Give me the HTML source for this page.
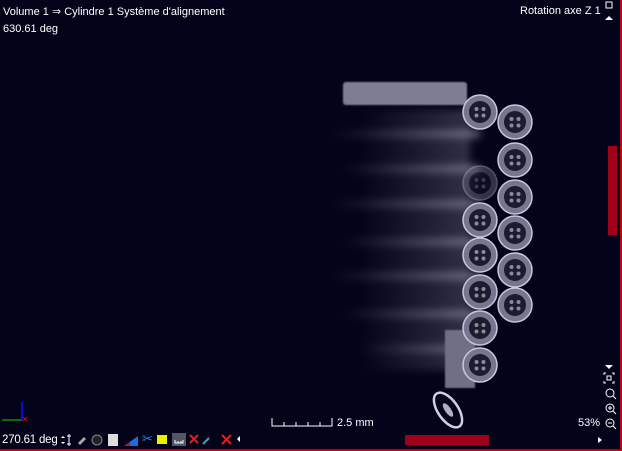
<!DOCTYPE html>
<html><head><meta charset="utf-8"><style>
html,body{margin:0;padding:0;background:#03031a;width:622px;height:451px;overflow:hidden;font-family:"Liberation Sans",sans-serif;color:#fff}
.t{position:absolute;font-size:11px;white-space:nowrap}
</style></head><body>
<div style="position:absolute;right:0;top:0;width:2px;height:451px;background:#c00010"></div>
<div style="position:absolute;left:0;bottom:0;width:622px;height:2px;background:#c00010"></div>
<svg width="622" height="451" style="position:absolute;left:0;top:0">
<defs>
<filter id="b" x="-50%" y="-50%" width="200%" height="200%"><feGaussianBlur stdDeviation="4"/></filter>
<filter id="b1"><feGaussianBlur stdDeviation="0.8"/></filter>
<linearGradient id="g" x1="0" x2="1"><stop offset="0" stop-color="#8a8aa0" stop-opacity="0"/><stop offset="1" stop-color="#9a9ab0" stop-opacity="0.6"/></linearGradient>
<g id="c"><circle r="17" fill="#767690" stroke="#c8c8d8" stroke-width="1.5"/><circle r="11" fill="#1c1c30"/><g fill="#8a8a9e"><circle cx="-3.5" cy="-3" r="2"/><circle cx="3.5" cy="-3" r="2"/><circle cx="-3.5" cy="3.5" r="2"/><circle cx="3.5" cy="3.5" r="2"/></g></g>
</defs>
<g filter="url(#b)">
<rect x="360" y="110" width="110" height="260" fill="url(#g)" opacity="0.5"/>
<g fill="url(#g)">
<rect x="330" y="130" width="150" height="8"/><rect x="340" y="165" width="140" height="8"/><rect x="330" y="200" width="150" height="8"/>
<rect x="340" y="238" width="140" height="8"/><rect x="330" y="272" width="150" height="8"/><rect x="340" y="310" width="140" height="8"/><rect x="360" y="345" width="120" height="8"/>
</g></g>
<rect x="343" y="82" width="124" height="23" rx="3" fill="#7e7e92" filter="url(#b1)"/>
<rect x="445" y="330" width="30" height="58" fill="#707085" filter="url(#b1)"/>
<use href="#c" x="480" y="112"/><use href="#c" x="480" y="183" opacity="0.4"/><use href="#c" x="480" y="220"/><use href="#c" x="480" y="255"/><use href="#c" x="480" y="292"/><use href="#c" x="480" y="328"/><use href="#c" x="480" y="365"/>
<use href="#c" x="515" y="122"/><use href="#c" x="515" y="160"/><use href="#c" x="515" y="197"/><use href="#c" x="515" y="233"/><use href="#c" x="515" y="270"/><use href="#c" x="515" y="305"/>
<ellipse cx="448" cy="410" rx="10" ry="20" transform="rotate(-35 448 410)" fill="none" stroke="#d0d0e0" stroke-width="2.5"/>
<ellipse cx="448" cy="410" rx="3" ry="8" transform="rotate(-35 448 410)" fill="#b0b0c0"/>
<rect x="608" y="146" width="9" height="89" fill="#a0001a"/>
<rect x="405" y="435" width="84" height="10" fill="#a0001a"/>
<path d="M272 418v8h60v-8M284 426v-4M296 426v-4M308 426v-4M320 426v-4" stroke="#fff" fill="none"/>
<line x1="22" y1="420" x2="22" y2="402" stroke="#0010d0" stroke-width="2"/>
<line x1="22" y1="420" x2="2" y2="420" stroke="#0a6a0a" stroke-width="2"/>
<path d="M23 417l4 4M27 417l-4 4" stroke="#d00" />
<path d="M606 2h6v6h-6z" stroke="#fff" fill="none"/><path d="M605 20l4-4 4 4z" fill="#fff"/>
<path d="M605 365l4 4 4-4z" fill="#fff"/>
<path d="M606 373h-2v2M612 373h2v2M606 383h-2v-2M612 383h2v-2M607 376h4v4h-4z" stroke="#fff" fill="none"/>
<circle cx="610" cy="393" r="4" stroke="#fff" fill="none"/><path d="M613 396l3 3" stroke="#fff"/>
<circle cx="610" cy="408" r="4" stroke="#fff" fill="none"/><path d="M613 411l3 3M608 408h4M610 406v4" stroke="#fff"/>
<circle cx="610" cy="423" r="4" stroke="#fff" fill="none"/><path d="M613 426l3 3M608 423h4" stroke="#fff"/>
<path d="M598 437l4 3-4 3z" fill="#fff"/>
<path d="M240 436l-3 3 3 3z" fill="#fff"/>
<path d="M63 436l-2 2h4zM63 444l-2-2h4z" fill="#fff"/><path d="M69 434v12M67 436h4M67 444h4" stroke="#fff"/>
<path d="M78 443l6-6 2 2-6 6z" fill="#aaa"/>
<circle cx="97" cy="440" r="5" fill="#222" stroke="#888"/>
<rect x="108" y="434" width="10" height="12" fill="#ddd"/>
<path d="M124 446l14-10v10z" fill="#1870e0"/><path d="M124 446l6-4v4z" fill="#d01010"/>
<rect x="157" y="435" width="10" height="9" fill="#ee0"/>
<rect x="172" y="433" width="14" height="13" fill="#556"/>
<path d="M175 440v3h8v-3M178 443v-2M181 443v-2" stroke="#fff" fill="none"/>
<path d="M190 435l8 8M198 435l-8 8" stroke="#e02020" stroke-width="2"/>
<path d="M203 444l6-6" stroke="#20b0c0" stroke-width="2"/>
<path d="M222 435l9 9M231 435l-9 9" stroke="#e02020" stroke-width="2"/>
</svg>
<div class="t" style="left:3px;top:5px">Volume 1 ⇒ Cylindre 1 Système d'alignement</div>
<div class="t" style="left:3px;top:23px">630.61 deg</div>
<div class="t" style="left:520px;top:5px">Rotation axe Z 1</div>
<div class="t" style="left:337px;top:417px">2.5 mm</div>
<div class="t" style="left:578px;top:417px">53%</div>
<div class="t" style="left:2px;top:434px;font-size:11.5px;letter-spacing:-0.2px">270.61 deg</div>
<div class="t" style="left:142px;top:431px;color:#1a8af0;font-size:13px">✂</div>
</body></html>
